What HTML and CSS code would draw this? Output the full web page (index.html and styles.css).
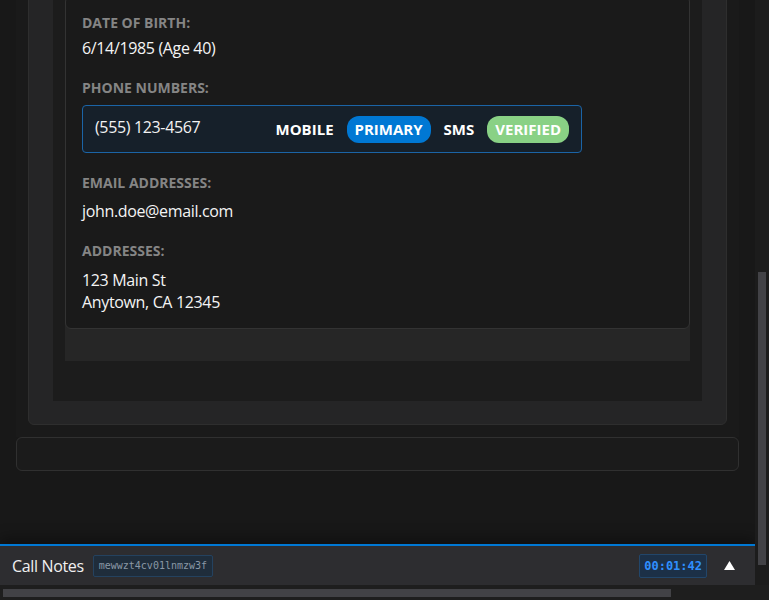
FILE: index.html
```html
<!DOCTYPE html>
<html lang="en">
<head>
<meta charset="utf-8">
<title>Contact details</title>
<link rel="stylesheet" href="styles.css">
</head>
<body>
  <div class="app">
    <div class="viewport">
      <div class="page">
        <section class="section">
          <div class="panel">
            <div class="inner">
              <div class="tab">
                <div class="card">
                  <div class="field">
                    <div class="label">Date of Birth:</div>
                    <div class="value">6/14/1985 (Age 40)</div>
                  </div>
                  <div class="field field-phones">
                    <div class="label">Phone Numbers:</div>
                    <ul class="list">
                      <li class="phone">
                        <span class="phone-num">(555) 123-4567</span>
                        <span class="tags">
                          <span class="tag">MOBILE</span>
                          <span class="tag pill primary">PRIMARY</span>
                          <span class="tag">SMS</span>
                          <span class="tag pill verified">VERIFIED</span>
                        </span>
                      </li>
                    </ul>
                  </div>
                  <div class="field">
                    <div class="label">Email Addresses:</div>
                    <ul class="list">
                      <li class="value">john.doe@email.com</li>
                    </ul>
                  </div>
                  <div class="field">
                    <div class="label">Addresses:</div>
                    <ul class="list list-address">
                      <li class="value">123 Main St<br>Anytown, CA 12345</li>
                    </ul>
                  </div>
                </div>
              </div>
            </div>
          </div>
        </section>
        <div class="notes-box"></div>
      </div>
    </div>
    <footer class="footer">
      <span class="footer-title">Call Notes</span>
      <span class="call-id">mewwzt4cv01lnmzw3f</span>
      <span class="spacer"></span>
      <span class="timer">00:01:42</span>
      <button class="toggle" aria-label="Expand">
        <svg width="11" height="9" viewBox="0 0 11 9"><polygon points="5.5,0 11,9 0,9" fill="#ffffff"/></svg>
      </button>
    </footer>
  </div>
  <div class="vscroll"><div class="vthumb"></div></div>
  <div class="hscroll"><div class="hthumb"></div></div>
  <div class="corner"></div>
</body>
</html>
```
FILE: styles.css
```css
* { box-sizing: border-box; }
html, body { margin: 0; padding: 0; }
body {
  height: 100vh;
  overflow: hidden;
  background: #181818;
  font-family: "Open Sans", "Noto Sans", sans-serif;
  color: #f2f2f2;
  display: grid;
  grid-template-columns: 1fr 14px;
  grid-template-rows: 1fr 15px;
}
.app {
  grid-column: 1;
  grid-row: 1;
  display: flex;
  flex-direction: column;
  min-height: 0;
  overflow: hidden;
}
.viewport {
  flex: 1;
  overflow: hidden;
  min-height: 0;
}
.page {
  padding: 0 16px;
  margin-top: -53px;
}
.section {
  background: #1a1a1a;
  padding: 12px;
}
.panel {
  background: #252526;
  border: 1px solid #2e2e2e;
  border-radius: 6px;
  padding: 24px 24px 23px;
}
.inner {
  background: #1c1c1c;
  padding: 12px 12px 40px;
}
.tab {
  background: #262626;
  padding-bottom: 32px;
}
.card {
  background: #1a1a1a;
  border: 1px solid #333333;
  border-radius: 6px;
  padding: 16px 16px 15px;
}
.field { margin-bottom: 19px; }
.field-phones { margin-bottom: 20px; }
.field:last-child { margin-bottom: 0; }
.label {
  font-size: 14px;
  line-height: 19px;
  font-weight: 700;
  text-transform: uppercase;
  color: #858585;
  margin-bottom: 5px;
}
.value {
  font-size: 16px;
  line-height: 22px;
  letter-spacing: -0.35px;
  color: #f4f4f4;
}
.list {
  list-style: none;
  margin: 0;
  padding: 3px 0 0;
}
.list-address { padding-top: 4px; }
.phone {
  width: 500px;
  height: 48px;
  display: flex;
  align-items: center;
  justify-content: space-between;
  background: #16202a;
  border: 1px solid #1b64a6;
  border-radius: 4px;
  padding: 0 12px;
}
.phone-num {
  font-size: 16px;
  line-height: 22px;
  letter-spacing: -0.35px;
  margin-top: -4px;
}
.tags {
  display: flex;
  align-items: center;
  gap: 13px;
}
.tag {
  font-size: 15px;
  font-weight: 700;
  line-height: 23px;
  color: #ffffff;
}
.pill {
  padding: 2px 8px;
  border-radius: 12px;
}
.primary { background: #0078d4; }
.verified { background: #89d185; }
.notes-box {
  height: 34px;
  border: 1px solid #303030;
  border-radius: 6px;
  background: #1b1b1b;
}
.footer {
  flex: none;
  height: 41px;
  border-top: 2px solid #0078d4;
  background: #2d2d30;
  display: flex;
  align-items: center;
  padding: 0 12px;
  box-shadow: 0 -6px 14px rgba(0, 0, 0, 0.35);
}
.footer-title {
  font-size: 16px;
  letter-spacing: -0.35px;
  color: #f0f0f0;
}
.call-id {
  margin-left: 9px;
  height: 22px;
  display: inline-flex;
  align-items: center;
  padding: 0 5px;
  font-family: "DejaVu Sans Mono", "Liberation Mono", monospace;
  font-size: 10px;
  color: #8a98a6;
  background: #1f2d3b;
  border: 1px solid #24425f;
  border-radius: 2px;
}
.spacer { flex: 1; }
.timer {
  height: 24px;
  display: inline-flex;
  align-items: center;
  padding: 0 4px;
  font-family: "DejaVu Sans Mono", "Liberation Mono", monospace;
  font-size: 12px;
  font-weight: 700;
  color: #2f8fff;
  background: #1c3047;
  border: 1px solid #22466a;
  border-radius: 2px;
}
.toggle {
  margin-left: 9px;
  padding: 4px 8px;
  background: none;
  border: 0;
  display: inline-flex;
  align-items: center;
  cursor: pointer;
}
.vscroll {
  grid-column: 2;
  grid-row: 1;
  background: #1c1c1c;
  padding: 272px 3px 0;
}
.vthumb {
  height: 293px;
  background: #424246;
}
.hscroll {
  grid-column: 1;
  grid-row: 2;
  background: #1e1e1e;
  padding: 4px 0 3px 3px;
}
.hthumb {
  width: 668px;
  height: 8px;
  background: #424246;
}
.corner {
  grid-column: 2;
  grid-row: 2;
  background: #1e1e1e;
}
```
